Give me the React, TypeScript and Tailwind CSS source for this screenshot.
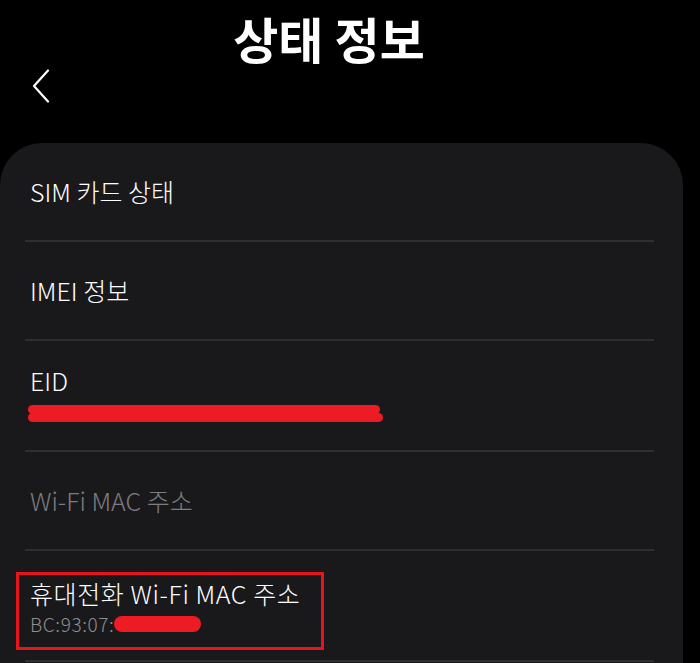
const font = { fontFamily: '"Noto Sans CJK KR", "Noto Sans", sans-serif' };

const Divider = () => <div className="mx-[25px] h-[2px] w-[629px] bg-[#2f2f31]" />;

const BackIcon = () => (
    <svg width="18" height="34" viewBox="0 0 18 34" fill="none">
        <polyline points="16,1.5 2,17 16,32.5" stroke="#ffffff" strokeWidth="2.2" strokeLinecap="round" strokeLinejoin="round" />
    </svg>
);

export default function App() {
    return (
        <div className="h-[663px] w-[700px] overflow-hidden bg-black" style={font}>
            <header className="h-[143px]">
                <h1 className="pr-[42px] pt-[8px] text-center text-[49px] font-bold leading-[60px] text-white">
                    상태 정보
                </h1>
                <div className="ml-[32px] mt-[1px]">
                    <BackIcon />
                </div>
            </header>

            <div className="h-[600px] w-[683px] rounded-[42px] bg-[#19191b]">
                <div className="flex h-[97px] items-center px-[30px] text-[25px] font-light text-white">
                    SIM 카드 상태
                </div>
                <Divider />
                <div className="flex h-[97px] items-center px-[30px] text-[25px] font-light text-white">
                    IMEI 정보
                </div>
                <Divider />
                <div className="flex h-[109px] flex-col justify-center px-[28px]">
                    <div className="px-[2px] text-[25px] font-light leading-[34px] text-white">EID</div>
                    <div className="mt-[8px] flex flex-col">
                        <span className="h-[9px] w-[352px] rounded-full bg-[#ed1c24]" />
                        <span className="-mt-[1px] h-[9px] w-[355px] rounded-full bg-[#ed1c24]" />
                    </div>
                    <div className="h-[6px]" />
                </div>
                <Divider />
                <div className="flex h-[97px] items-center px-[30px] text-[25px] font-light text-[#7d7d7f]">
                    Wi-Fi MAC 주소
                </div>
                <Divider />
                <div className="h-[109px] pl-[16px] pt-[21px]">
                    <div className="w-[308px] border-[3px] border-[#e8141c] pb-[11px] pl-[11px] pt-[1px]">
                        <div className="text-[25px] font-light leading-[34px] tracking-[0.6px] text-white">
                            휴대전화 Wi-Fi MAC 주소
                        </div>
                        <div className="mt-[2px] flex items-center text-[19px] font-light leading-[24px] tracking-[0.6px] text-[#8e8e90]">
                            <span>BC:93:07:</span>
                            <span className="h-[16px] w-[87px] rounded-full bg-[#ed1c24]" />
                        </div>
                    </div>
                </div>
                <Divider />
            </div>
        </div>
    );
}
